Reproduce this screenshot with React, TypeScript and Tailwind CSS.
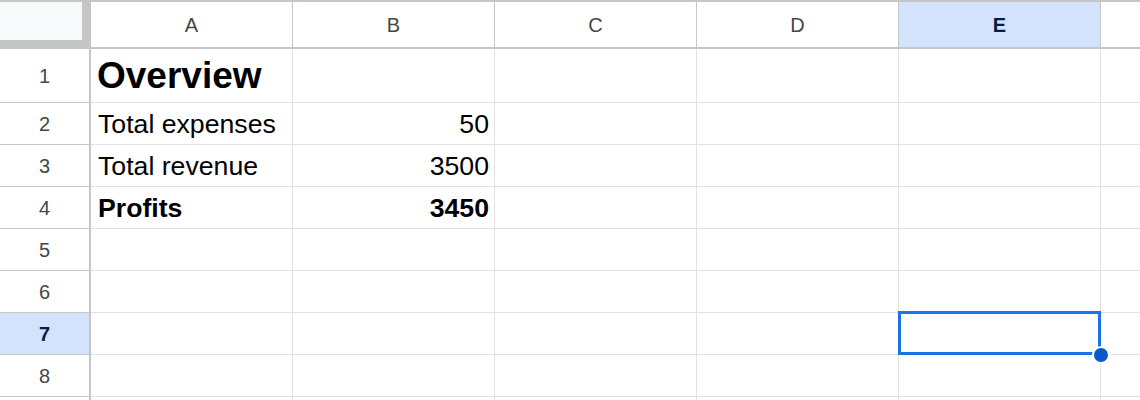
const cols = ['A', 'B', 'C', 'D', 'E']

type Row = {
  n: number
  tall?: boolean
  label?: string
  value?: string
  bold?: boolean
  title?: boolean
  hideNumber?: boolean
}

const rows: Row[] = [
  { n: 1, tall: true, label: 'Overview', title: true },
  { n: 2, label: 'Total expenses', value: '50' },
  { n: 3, label: 'Total revenue', value: '3500' },
  { n: 4, label: 'Profits', value: '3450', bold: true },
  { n: 5 },
  { n: 6 },
  { n: 7 },
  { n: 8 },
  // only the top edge of row 9 is on screen
  { n: 9, hideNumber: true },
]

const activeCol = 'E'
const activeRow = 7

function ColumnHeader() {
  return (
    <div className="flex h-[49px] border-y-2 border-[#c4c7c5]">
      {/* corner */}
      <div className="w-[91px] shrink-0 bg-[#c4c7c5]">
        <div className="h-[38px] w-[82px] bg-[#f8f9fa]" />
      </div>
      {cols.map((c) => (
        <div
          key={c}
          className={
            c === activeCol
              ? 'flex w-[202px] shrink-0 items-center justify-center border-r border-[#c4c7c5] bg-[#d3e3fd] text-[20px] font-bold text-[#041e49]'
              : 'flex w-[202px] shrink-0 items-center justify-center border-r border-[#c4c7c5] bg-white text-[20px] text-[#444746]'
          }
        >
          {c}
        </div>
      ))}
      <div className="flex-1 bg-white" />
    </div>
  )
}

function SheetRow({ row }: { row: Row }) {
  const h = row.tall ? 'h-[54px]' : 'h-[42px]'
  const isActive = row.n === activeRow
  return (
    <div className={`flex ${h}`}>
      <div
        className={
          isActive
            ? 'flex w-[91px] shrink-0 items-center justify-center border-r-2 border-b border-[#c4c7c5] bg-[#d3e3fd] text-[20px] font-bold text-[#041e49]'
            : 'flex w-[91px] shrink-0 items-center justify-center border-r-2 border-b border-[#c4c7c5] bg-white text-[20px] text-[#444746]'
        }
      >
        {!row.hideNumber && row.n}
      </div>
      {cols.map((c) => (
        <div
          key={c}
          className="relative flex w-[202px] shrink-0 items-center border-r border-b border-[#e1e1e1] text-black"
        >
          {c === 'A' && row.label && (
            <span
              className={
                row.title
                  ? 'pl-[6px] text-[37px] font-bold'
                  : row.bold
                    ? 'pl-[7px] text-[26.67px] font-bold'
                    : 'pl-[7px] text-[26.67px]'
              }
            >
              {row.label}
            </span>
          )}
          {c === 'B' && row.value && (
            <span className={row.bold ? 'ml-auto pr-[5px] text-[26.67px] font-bold' : 'ml-auto pr-[5px] text-[26.67px]'}>
              {row.value}
            </span>
          )}
          {c === activeCol && isActive && (
            <>
              <div className="absolute -top-[2px] -left-px z-10 h-[44px] w-[203px] border-[3px] border-[#1a73e8]" />
              {/* fill handle */}
              <div className="absolute top-[33px] left-[193px] z-20 h-[18px] w-[18px] rounded-full border-2 border-white bg-[#0b57d0]" />
            </>
          )}
        </div>
      ))}
      <div className="flex-1 border-b border-[#e1e1e1]" />
    </div>
  )
}

export default function App() {
  return (
    <div
      className="h-[400px] w-[1140px] overflow-hidden bg-white"
      style={{ fontFamily: '"Liberation Sans", Arial, sans-serif' }}
    >
      <ColumnHeader />
      {rows.map((r) => (
        <SheetRow key={r.n} row={r} />
      ))}
    </div>
  )
}
